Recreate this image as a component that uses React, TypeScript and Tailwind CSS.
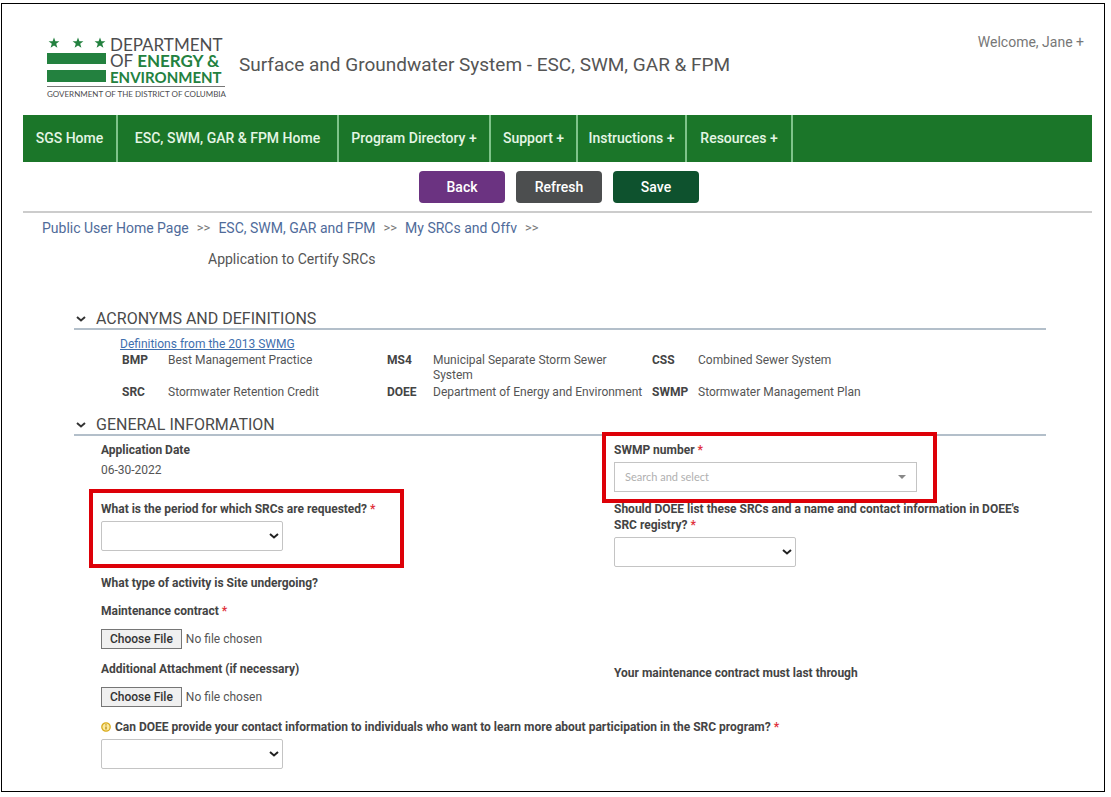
import type { ReactNode } from 'react';

const navItems = [
  { label: 'SGS Home', width: 'w-[95px]' },
  { label: 'ESC, SWM, GAR & FPM Home', width: 'w-[221px]' },
  { label: 'Program Directory +', width: 'w-[152px]' },
  { label: 'Support +', width: 'w-[87px]' },
  { label: 'Instructions +', width: 'w-[109px]' },
  { label: 'Resources +', width: 'w-[106px]' },
];

const acronyms = [
  ['BMP', 'Best Management Practice'],
  ['MS4', 'Municipal Separate Storm Sewer System'],
  ['CSS', 'Combined Sewer System'],
  ['SRC', 'Stormwater Retention Credit'],
  ['DOEE', 'Department of Energy and Environment'],
  ['SWMP', 'Stormwater Management Plan'],
];

function Chevron({ className }: { className: string }) {
  return (
    <svg viewBox="0 0 10 6" className={className} fill="none" aria-hidden="true">
      <path d="M1 1l4 3.4L9 1" stroke="currentColor" strokeWidth="2" />
    </svg>
  );
}

function Logo() {
  return (
    <div className="w-[178px] font-['Lato',sans-serif] text-[#4d4d4f]">
      <div className="flex gap-1 h-12">
        <svg viewBox="0 0 59 48" className="w-[59px] h-12 shrink-0" fill="#23813f" aria-hidden="true">
          {[7, 31, 53].map((x) => (
            <path
              key={x}
              transform={`translate(${x} 6)`}
              d="M0-5.5l1.4 3.8h4l-3.2 2.5 1.2 3.9L0 2.4l-3.4 2.3 1.2-3.9-3.2-2.5h4z"
            />
          ))}
          <path d="M0 16h59v11H0zM0 33h59v12H0z" />
        </svg>
        <div className="text-[17px] leading-4 whitespace-nowrap">
          <p>DEPARTMENT</p>
          <p>
            OF <b className="text-[#23813f]">ENERGY &amp;</b>
          </p>
          <p className="text-[15px] leading-4 font-bold text-[#23813f]">ENVIRONMENT</p>
        </div>
      </div>
      <p className="border-t border-[#777] mt-px pt-px text-[8px] leading-3 whitespace-nowrap">
        GOVERNMENT OF THE DISTRICT OF COLUMBIA
      </p>
    </div>
  );
}

function SectionTitle({ children }: { children: ReactNode }) {
  return (
    <h2 className="flex items-center gap-2.5 border-b-2 border-[#b3bfca] text-base leading-[18px] text-[#4a4a4a]">
      <button type="button" aria-label="Toggle section" className="pl-0.5 text-[#333]">
        <Chevron className="w-2.5 h-1.5" />
      </button>
      {children}
    </h2>
  );
}

function Required() {
  return <span className="text-[#e0303a]"> *</span>;
}

function SelectBox({ id }: { id: string }) {
  return (
    <div className="relative w-[182px] mt-1">
      <select
        id={id}
        className="appearance-none block w-full h-[30px] border border-[#c4c4c4] rounded-xs bg-white"
      />
      <Chevron className="absolute right-1 top-3 w-2.5 h-1.5 text-[#222] pointer-events-none" />
    </div>
  );
}

function FileField({ id, children }: { id: string; children: ReactNode }) {
  return (
    <div className="h-[58px]">
      <label htmlFor={id} className="block font-bold">
        {children}
      </label>
      <input
        id={id}
        type="file"
        className="block mt-2.5 text-[#555] file:mr-1 file:px-2 file:h-5 file:border file:border-solid file:border-[#767676] file:bg-[#f0f0f0] file:font-medium file:text-[#333]"
      />
    </div>
  );
}

// red frame drawn over a field to call it out
function Highlight({ className }: { className: string }) {
  return <div className={`absolute border-4 border-[#dd0008] pointer-events-none ${className}`} />;
}

function App() {
  return (
    <div className="bg-white pt-[3px] pl-px pr-1.5 pb-[5px]">
      <div className="border border-black pb-[22px] font-['Roboto',sans-serif] text-[#444]">
        <div className="pl-[21px] pr-3">
          <header className="flex h-[111px] pl-6 pr-2">
            <div className="pt-[33px]">
              <Logo />
            </div>
            <h1 className="pl-3.5 pt-[49px] text-[19px] leading-6 text-[#555]">
              Surface and Groundwater System - ESC, SWM, GAR &amp; FPM
            </h1>
            <button type="button" className="ml-auto self-start pt-7 text-sm leading-5 text-[#777]">
              Welcome, Jane +
            </button>
          </header>

          <nav className="flex h-[47px] bg-[#1b7629]">
            {navItems.map(({ label, width }) => (
              <a
                key={label}
                href="#"
                className={`flex items-center justify-center border-r-2 border-[#7fc48a] pb-0.5 text-sm font-medium whitespace-nowrap text-[#e4f5e4] ${width}`}
              >
                {label}
              </a>
            ))}
          </nav>

          <div className="flex justify-center gap-[11px] pl-[3px] pt-[9px] pb-2 border-b-2 border-[#ccc] text-sm font-medium text-white">
            <button type="button" className="w-[86px] h-8 rounded-sm bg-[#6b3381]">
              Back
            </button>
            <button type="button" className="w-[86px] h-8 rounded-sm bg-[#4c4e4f]">
              Refresh
            </button>
            <button type="button" className="w-[86px] h-8 rounded-sm bg-[#0e522e]">
              Save
            </button>
          </div>

          <div className="flex gap-2 pl-[19px] pt-[5px] text-sm leading-5 text-[#4f6b9a]">
            <a href="#">Public User Home Page</a>
            <span className="text-[13px] leading-5 text-[#777]">&gt;&gt;</span>
            <a href="#">ESC, SWM, GAR and FPM</a>
            <span className="text-[13px] leading-5 text-[#777]">&gt;&gt;</span>
            <a href="#">My SRCs and Offv</a>
            <span className="text-[13px] leading-5 text-[#777]">&gt;&gt;</span>
          </div>
          <p className="pl-[185px] pt-[11px] text-sm leading-5 text-[#555]">Application to Certify SRCs</p>
        </div>

        <main className="ml-[72px] mr-[58px] mt-[41px] text-xs leading-4">
          <SectionTitle>ACRONYMS AND DEFINITIONS</SectionTitle>
          <div className="pl-[46px] pt-1.5">
            <a href="#" className="block w-fit underline text-[#3f6fae]">
              Definitions from the 2013 SWMG
            </a>
            <dl className="grid grid-cols-[46px_219px_46px_219px_46px_1fr] pl-0.5 leading-[15px]">
              {acronyms.map(([term, meaning]) => (
                <div key={term} className="contents">
                  <dt className="font-bold pt-px pb-px">{term}</dt>
                  <dd className="pt-px pb-px pr-1 text-[#555]">{meaning}</dd>
                </div>
              ))}
            </dl>
          </div>

          <div className="mt-[15px]">
            <SectionTitle>GENERAL INFORMATION</SectionTitle>
          </div>
          <form className="grid grid-cols-[513fr_432fr] pl-[27px] pt-1.5">
            <div className="h-[59px]">
              <p className="font-bold">Application Date</p>
              <p className="pt-1 text-[#555]">06-30-2022</p>
            </div>
            <div className="relative">
              <label htmlFor="swmp" className="font-bold">
                SWMP number
                <Required />
              </label>
              <div className="flex items-center w-[303px] h-[30px] mt-1 px-2.5 border border-[#c4c4c4]">
                <input
                  id="swmp"
                  placeholder="Search and select"
                  className="grow font-['Lato',sans-serif] text-[11px] outline-none placeholder:text-[#b0b0b0]"
                />
                <svg viewBox="0 0 8 4" className="w-2 h-1" fill="#888" aria-hidden="true">
                  <path d="M0 0h8L4 4z" />
                </svg>
              </div>
              <Highlight className="-left-3 -top-2.5 w-[335px] h-[71px]" />
            </div>

            <div className="relative h-[74px]">
              <label htmlFor="period" className="font-bold">
                What is the period for which SRCs are requested?
                <Required />
              </label>
              <SelectBox id="period" />
              <Highlight className="-left-3 -top-3 w-[315px] h-[79px]" />
            </div>
            <div>
              <label htmlFor="registry" className="block pr-4 font-bold">
                Should DOEE list these SRCs and a name and contact information in DOEE's SRC registry?
                <Required />
              </label>
              <SelectBox id="registry" />
            </div>

            <p className="col-span-2 h-7 font-bold">What type of activity is Site undergoing?</p>

            <div className="col-span-2">
              <FileField id="contract">
                Maintenance contract
                <Required />
              </FileField>
            </div>
            <FileField id="attachment">Additional Attachment (if necessary)</FileField>
            <p className="pt-1 font-bold">Your maintenance contract must last through</p>

            <div className="col-span-2">
              <div className="flex items-center gap-1">
                <svg viewBox="0 0 10 10" className="w-2.5 h-2.5" fill="none" aria-hidden="true">
                  <circle cx="5" cy="5" r="4.2" fill="#fbe9a0" stroke="#d9ab1c" strokeWidth="1.3" />
                  <path d="M5 2.3v1.2M5 4.4v3.2" stroke="#b98d10" strokeWidth="1.3" />
                </svg>
                <label htmlFor="contact" className="font-bold">
                  Can DOEE provide your contact information to individuals who want to learn more about
                  participation in the SRC program?
                  <Required />
                </label>
              </div>
              <SelectBox id="contact" />
            </div>
          </form>
        </main>
      </div>
    </div>
  );
}

export default App;
